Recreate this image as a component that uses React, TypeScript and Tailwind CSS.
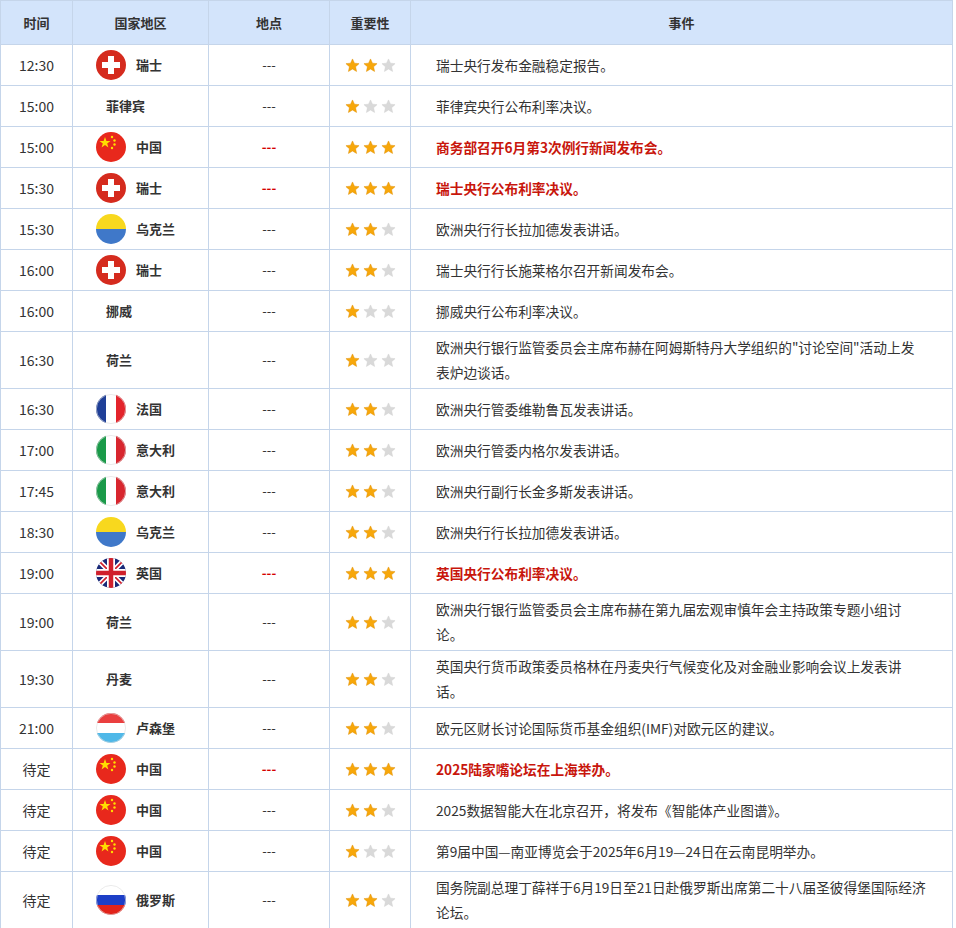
import React from 'react';

type Row = { t: string; c: string; f?: string; s: number; e: string; hot?: boolean; tall?: boolean };

const ROWS: Row[] = [
  { t: '12:30', c: '瑞士', f: 'ch', s: 2, e: '瑞士央行发布金融稳定报告。' },
  { t: '15:00', c: '菲律宾', s: 1, e: '菲律宾央行公布利率决议。' },
  { t: '15:00', c: '中国', f: 'cn', s: 3, e: '商务部召开6月第3次例行新闻发布会。', hot: true },
  { t: '15:30', c: '瑞士', f: 'ch', s: 3, e: '瑞士央行公布利率决议。', hot: true },
  { t: '15:30', c: '乌克兰', f: 'ua', s: 2, e: '欧洲央行行长拉加德发表讲话。' },
  { t: '16:00', c: '瑞士', f: 'ch', s: 2, e: '瑞士央行行长施莱格尔召开新闻发布会。' },
  { t: '16:00', c: '挪威', s: 1, e: '挪威央行公布利率决议。' },
  { t: '16:30', c: '荷兰', s: 1, e: '欧洲央行银行监管委员会主席布赫在阿姆斯特丹大学组织的"讨论空间"活动上发表炉边谈话。', tall: true },
  { t: '16:30', c: '法国', f: 'fr', s: 2, e: '欧洲央行管委维勒鲁瓦发表讲话。' },
  { t: '17:00', c: '意大利', f: 'it', s: 2, e: '欧洲央行管委内格尔发表讲话。' },
  { t: '17:45', c: '意大利', f: 'it', s: 2, e: '欧洲央行副行长金多斯发表讲话。' },
  { t: '18:30', c: '乌克兰', f: 'ua', s: 2, e: '欧洲央行行长拉加德发表讲话。' },
  { t: '19:00', c: '英国', f: 'gb', s: 3, e: '英国央行公布利率决议。', hot: true },
  { t: '19:00', c: '荷兰', s: 2, e: '欧洲央行银行监管委员会主席布赫在第九届宏观审慎年会主持政策专题小组讨论。', tall: true },
  { t: '19:30', c: '丹麦', s: 2, e: '英国央行货币政策委员格林在丹麦央行气候变化及对金融业影响会议上发表讲话。', tall: true },
  { t: '21:00', c: '卢森堡', f: 'lu', s: 2, e: '欧元区财长讨论国际货币基金组织(IMF)对欧元区的建议。' },
  { t: '待定', c: '中国', f: 'cn', s: 3, e: '2025陆家嘴论坛在上海举办。', hot: true },
  { t: '待定', c: '中国', f: 'cn', s: 2, e: '2025数据智能大在北京召开，将发布《智能体产业图谱》。' },
  { t: '待定', c: '中国', f: 'cn', s: 1, e: '第9届中国—南亚博览会于2025年6月19—24日在云南昆明举办。' },
  { t: '待定', c: '俄罗斯', f: 'ru', s: 2, e: '国务院副总理丁薛祥于6月19日至21日赴俄罗斯出席第二十八届圣彼得堡国际经济论坛。', tall: true },
];

function Flag({ f }: { f: string }) {
  const id = 'clip-' + f;
  let body: React.ReactNode = null;
  if (f === 'ch')
    body = (<>
      <rect width="30" height="30" fill="#d52b1e" />
      <rect x="12" y="6" width="6" height="18" fill="#fff" />
      <rect x="6" y="12" width="18" height="6" fill="#fff" />
    </>);
  if (f === 'cn')
    body = (<>
      <rect width="30" height="30" fill="#e8281c" />
      <polygon points="9,5 10.4,9 14.5,9 11.2,11.5 12.4,15.5 9,13 5.6,15.5 6.8,11.5 3.5,9 7.6,9" fill="#ffde00" />
      <circle cx="16" cy="5" r="1.2" fill="#ffde00" />
      <circle cx="18.5" cy="8.5" r="1.2" fill="#ffde00" />
      <circle cx="18.5" cy="12.5" r="1.2" fill="#ffde00" />
      <circle cx="16" cy="16" r="1.2" fill="#ffde00" />
    </>);
  if (f === 'ua')
    body = (<>
      <rect width="30" height="15" fill="#f8d81e" />
      <rect y="15" width="30" height="15" fill="#3f78c9" />
    </>);
  if (f === 'fr' || f === 'it') {
    const c = f === 'fr' ? ['#1f3f97', '#fff', '#e3242b'] : ['#1a9a49', '#fff', '#d8262e'];
    body = (<>
      <rect width="10" height="30" fill={c[0]} />
      <rect x="10" width="10" height="30" fill={c[1]} />
      <rect x="20" width="10" height="30" fill={c[2]} />
    </>);
  }
  if (f === 'lu' || f === 'ru') {
    const c = f === 'lu' ? ['#ea3f3f', '#fff', '#4fb8e8'] : ['#fff', '#1d3fc7', '#e2231a'];
    body = (<>
      <rect width="30" height="10" fill={c[0]} />
      <rect y="10" width="30" height="10" fill={c[1]} />
      <rect y="20" width="30" height="10" fill={c[2]} />
    </>);
  }
  if (f === 'gb')
    body = (<>
      <rect width="30" height="30" fill="#1a2a78" />
      <path d="M0 0L30 30M30 0L0 30" stroke="#fff" strokeWidth="5" />
      <path d="M0 0L30 30M30 0L0 30" stroke="#d0202c" strokeWidth="1.6" />
      <path d="M15 0V30M0 15H30" stroke="#fff" strokeWidth="8" />
      <path d="M15 0V30M0 15H30" stroke="#d0202c" strokeWidth="4.5" />
    </>);
  return (
    <svg width="30" height="30" viewBox="0 0 30 30" className="shrink-0">
      <defs><clipPath id={id}><circle cx="15" cy="15" r="15" /></clipPath></defs>
      <g clipPath={`url(#${id})`}>{body}</g>
      {(f === 'ru' || f === 'lu' || f === 'fr' || f === 'it') && <circle cx="15" cy="15" r="14.6" fill="none" stroke="#ddd" strokeWidth="0.6" />}
    </svg>
  );
}

function Star({ on }: { on: boolean }) {
  return (
    <svg width="15" height="15" viewBox="0 0 24 24">
      <polygon
        points="12,1.5 15.1,8.3 22.5,9 16.9,14 18.5,21.5 12,17.6 5.5,21.5 7.1,14 1.5,9 8.9,8.3"
        fill={on ? '#f7a70a' : '#d9d9d9'}
        stroke={on ? '#e08e00' : '#d0d0d0'}
        strokeWidth="0.8"
      />
    </svg>
  );
}

export default function App() {
  return (
    <div className="w-[956px] bg-white text-[13px] text-[#333]" style={{ fontFamily: '"Microsoft YaHei", "Noto Sans CJK SC", "Liberation Sans", sans-serif' }}>
      <table className="w-[953px] border-collapse table-fixed">
        <colgroup>
          <col className="w-[72px]" />
          <col className="w-[136px]" />
          <col className="w-[121px]" />
          <col className="w-[81px]" />
          <col />
        </colgroup>
        <thead>
          <tr className="h-[44px] bg-[#d3e4fb] text-[#333] font-bold">
            {['时间', '国家地区', '地点', '重要性', '事件'].map((h) => (
              <th key={h} className="border border-[#c5d5ea] font-bold">{h}</th>
            ))}
          </tr>
        </thead>
        <tbody>
          {ROWS.map((r, i) => (
            <tr key={i} className={r.tall ? 'h-[57px]' : 'h-[41px]'}>
              <td className="border border-[#c5d5ea] text-center text-[14px]">{r.t}</td>
              <td className="border border-[#c5d5ea]">
                {r.f ? (
                  <div className="flex items-center gap-[10px] pl-[23px]">
                    <Flag f={r.f} />
                    <span className="font-bold">{r.c}</span>
                  </div>
                ) : (
                  <div className="pl-[33px] font-bold">{r.c}</div>
                )}
              </td>
              <td className={`border border-[#c5d5ea] text-center ${r.hot ? 'text-[#d40000] font-bold' : ''}`}>---</td>
              <td className="border border-[#c5d5ea]">
                <div className="flex items-center gap-[3px] pl-[15px]">
                  {[0, 1, 2].map((k) => <Star key={k} on={k < r.s} />)}
                </div>
              </td>
              <td className={`border border-[#c5d5ea] pl-[25px] pr-[26px] text-[13.7px] leading-[25px] ${r.hot ? 'text-[#c8160c] font-bold' : ''}`}>{r.e}</td>
            </tr>
          ))}
        </tbody>
      </table>
    </div>
  );
}
